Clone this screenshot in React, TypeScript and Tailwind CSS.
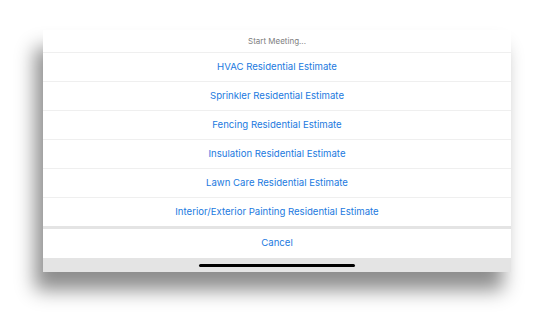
const OPTIONS = [
  "HVAC Residential Estimate",
  "Sprinkler Residential Estimate",
  "Fencing Residential Estimate",
  "Insulation Residential Estimate",
  "Lawn Care Residential Estimate",
  "Interior/Exterior Painting Residential Estimate",
];

export default function App() {
  return (
    <div
      className="w-[542px] h-[317px] bg-white pt-[30px] pl-[43px] overflow-hidden"
      style={{ fontFamily: "Inter, 'Liberation Sans', Arial, sans-serif" }}
    >
      <div className="w-[468px] bg-white shadow-[-8px_18px_18px_rgba(0,0,0,0.45)]">
        <div className="h-[22px] flex items-center justify-center text-[8px] text-[#808080]">
          Start Meeting...
        </div>
        {OPTIONS.map((label) => (
          <button
            key={label}
            type="button"
            className="w-full h-[29px] border-t border-[#efefef] flex items-center justify-center text-[9.6px] text-[#1b7ae0]"
          >
            {label}
          </button>
        ))}
        <div className="h-[3px] bg-[#e4e4e4]" />
        <button
          type="button"
          className="w-full h-[29px] flex items-center justify-center text-[9.6px] text-[#1b7ae0]"
        >
          Cancel
        </button>
        <div className="h-[14px] bg-[#e4e4e4] flex justify-center pt-[6px]">
          <div className="w-[156px] h-[3px] rounded-full bg-black" />
        </div>
      </div>
    </div>
  );
}
